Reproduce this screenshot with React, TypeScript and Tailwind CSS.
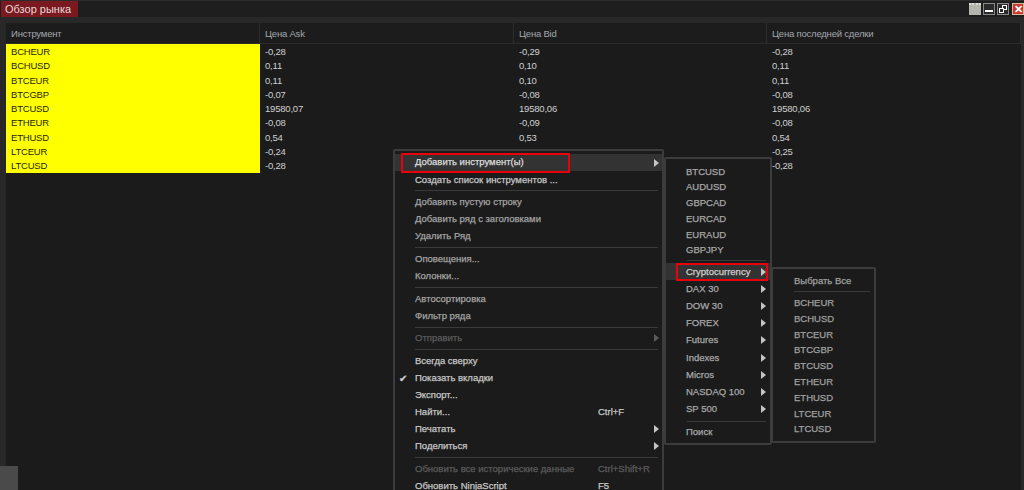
const COLUMNS = ['Инструмент', 'Цена Ask', 'Цена Bid', 'Цена последней сделки'];

const ROWS = [
  ['BCHEUR', '-0,28', '-0,29', '-0,28'],
  ['BCHUSD', '0,11', '0,10', '0,11'],
  ['BTCEUR', '0,11', '0,10', '0,11'],
  ['BTCGBP', '-0,07', '-0,08', '-0,08'],
  ['BTCUSD', '19580,07', '19580,06', '19580,06'],
  ['ETHEUR', '-0,08', '-0,09', '-0,08'],
  ['ETHUSD', '0,54', '0,53', '0,54'],
  ['LTCEUR', '-0,24', '-0,25', '-0,25'],
  ['LTCUSD', '-0,28', '-0,28', '-0,28'],
];

const COL_WIDTHS = ['w-[254px]', 'w-[254px]', 'w-[253px]', 'flex-1'];

type MainItem = {
  label?: string;
  hint?: string;
  arrow?: boolean;
  disabled?: boolean;
  checked?: boolean;
  dim?: boolean;
  active?: boolean;
};

const MAIN_MENU: MainItem[] = [
  { label: 'Добавить инструмент(ы)', arrow: true, active: true },
  { label: 'Создать список инструментов ...' },
  {},
  { label: 'Добавить пустую строку', dim: true },
  { label: 'Добавить ряд с заголовками', dim: true },
  { label: 'Удалить Ряд', dim: true },
  {},
  { label: 'Оповещения...', dim: true },
  { label: 'Колонки...', dim: true },
  {},
  { label: 'Автосортировка', dim: true },
  { label: 'Фильтр ряда', dim: true },
  {},
  { label: 'Отправить', arrow: true, disabled: true },
  {},
  { label: 'Всегда сверху' },
  { label: 'Показать вкладки', checked: true },
  { label: 'Экспорт...' },
  { label: 'Найти...', hint: 'Ctrl+F' },
  { label: 'Печатать', arrow: true },
  { label: 'Поделиться', arrow: true },
  {},
  { label: 'Обновить все исторические данные', hint: 'Ctrl+Shift+R', disabled: true },
  { label: 'Обновить NinjaScript', hint: 'F5' },
];

const SUB_TOP = ['BTCUSD', 'AUDUSD', 'GBPCAD', 'EURCAD', 'EURAUD', 'GBPJPY'];
const SUB_GROUPS = ['DAX 30', 'DOW 30', 'FOREX', 'Futures', 'Indexes', 'Micros', 'NASDAQ 100', 'SP 500'];
const CRYPTO = ['BCHEUR', 'BCHUSD', 'BTCEUR', 'BTCGBP', 'BTCUSD', 'ETHEUR', 'ETHUSD', 'LTCEUR', 'LTCUSD'];

function Arrow({ dim }: { dim?: boolean }) {
  return (
    <svg width="5" height="8" viewBox="0 0 5 8" className="shrink-0">
      <path d="M0 0 L5 4 L0 8 Z" fill={dim ? '#5a5a5a' : '#c4c4c4'} />
    </svg>
  );
}

function Separator({ className }: { className: string }) {
  return <div className={`h-px bg-[#3a3a3a] ${className}`} />;
}

function WindowButtons() {
  return (
    <div className="flex items-center gap-[2px] pt-[2px]">
      <div className="w-[12px] h-[12px] bg-[#b4b6ae] border-t-2 border-dotted border-[#dcdcdc]" />
      <div className="w-[12px] h-[12px] bg-[#2a2a2a] border border-[#8a8a8a] flex items-end justify-center pb-[2px]">
        <div className="w-[8px] h-[2px] bg-white" />
      </div>
      <div className="w-[12px] h-[12px] bg-[#2a2a2a] border border-[#8a8a8a] relative">
        <div className="absolute left-[4px] top-[1px] w-[5px] h-[5px] border border-white" />
        <div className="absolute left-[1px] top-[4px] w-[5px] h-[5px] border border-white bg-[#2a2a2a]" />
      </div>
      <div className="w-[12px] h-[12px] ml-[1px] bg-[#c9372c] border border-[#d8b9a0] flex items-center justify-center text-white text-[11px] leading-none font-bold">
        ✕
      </div>
    </div>
  );
}

function MarketGrid() {
  return (
    <div className="flex-1 ml-[5px] mr-[3px] mt-[6px] bg-[#1b1b1b] border-l border-[#262626]">
      <div className="flex h-[21px] border-b border-[#2c2c2c] bg-[#1c1c1c]">
        {COLUMNS.map((col, i) => (
          <div
            key={col}
            className={`${COL_WIDTHS[i]} pl-[5px] text-[9.5px] tracking-[-0.2px] leading-[21px] text-[#a3a8ad] border-r border-[#2c2c2c]`}
          >
            {col}
          </div>
        ))}
      </div>
      {ROWS.map((row) => (
        <div key={row[0]} className="flex h-[14.3px]">
          {row.map((cell, i) => (
            <div
              key={i}
              className={`${COL_WIDTHS[i]} pl-[5px] text-[9.5px] tracking-[-0.2px] leading-[16px] ${
                i === 0 ? 'bg-[#ffff00] text-[#1f1f00]' : 'text-[#cfcfcf]'
              }`}
            >
              {cell}
            </div>
          ))}
        </div>
      ))}
    </div>
  );
}

function MainMenu() {
  return (
    <div className="absolute left-[393px] top-[149px] w-[271px] h-[345px] bg-[#1b1b1b] border-2 border-[#3c3c3c] rounded-[2px] pt-[3px] [-webkit-text-stroke:0.25px]">
      {MAIN_MENU.map((item, i) => {
        if (!item.label) {
          return <Separator key={i} className="ml-[20px] mr-[4px] my-[2.25px]" />;
        }
        const color = item.disabled ? 'text-[#5c5c5c]' : item.dim ? 'text-[#a4a4a4]' : 'text-[#c8c8c8]';
        return (
          <div
            key={i}
            className={`relative flex items-center h-[17.1px] pl-[20px] pr-[3px] text-[9.5px] ${color} ${
              item.active ? 'bg-[#333333] text-[#dddddd]' : ''
            }`}
          >
            {item.checked && <span className="absolute left-[4px] text-[10px] text-[#d0d0d0]">✔</span>}
            <span className="w-[183px] whitespace-nowrap">{item.label}</span>
            <span className="flex-1 whitespace-nowrap">{item.hint}</span>
            {item.arrow && <Arrow dim={item.disabled} />}
            {item.active && (
              <div className="absolute left-[6px] top-[-1px] w-[169px] h-[20px] border-2 border-[#e8000b]" />
            )}
          </div>
        );
      })}
    </div>
  );
}

function InstrumentMenu() {
  return (
    <div className="absolute left-[664px] top-[157px] w-[108px] h-[288px] bg-[#1b1b1b] border-2 border-[#3c3c3c] rounded-[2px] pt-[4.5px] [-webkit-text-stroke:0.25px] text-[9.5px] text-[#a8a8a8]">
      {SUB_TOP.map((name) => (
        <div key={name} className="h-[15.8px] leading-[15.8px] pl-[20px]">
          {name}
        </div>
      ))}
      <Separator className="ml-[21px] mr-[4px] my-[2px]" />
      <div className="relative flex items-center justify-between h-[17px] pl-[20px] pr-[4px] bg-[#333333] text-[#cfcfcf]">
        <span>Cryptocurrency</span>
        <Arrow />
        <div className="absolute left-[10px] top-0 w-[92px] h-[18px] border-2 border-[#e8000b]" />
      </div>
      {SUB_GROUPS.map((name) => (
        <div key={name} className="flex items-center justify-between h-[17.2px] pl-[20px] pr-[4px]">
          <span>{name}</span>
          <Arrow />
        </div>
      ))}
      <Separator className="ml-[21px] mr-[4px] mt-[3px] mb-[1px]" />
      <div className="h-[17px] leading-[17px] pl-[20px]">Поиск</div>
    </div>
  );
}

function CryptoMenu() {
  return (
    <div className="absolute left-[771px] top-[267px] w-[105px] h-[176px] bg-[#1b1b1b] border-2 border-[#3c3c3c] rounded-[2px] pt-[4px] [-webkit-text-stroke:0.25px] text-[9.5px] text-[#a0a0a0]">
      <div className="h-[16px] leading-[16px] pl-[21px]">Выбрать Все</div>
      <Separator className="ml-[21px] mr-[4px] mt-[2px] mb-[3px]" />
      {CRYPTO.map((name) => (
        <div key={name} className="h-[15.8px] leading-[15.8px] pl-[21px]">
          {name}
        </div>
      ))}
    </div>
  );
}

export default function App() {
  return (
    <div className="relative w-[1024px] h-[490px] overflow-hidden bg-[#282828] font-['Liberation_Sans',Arial,sans-serif] flex flex-col">
      <div className="h-[17px] bg-[#1e1e1e] flex items-start justify-between border-t border-[#2c2c2c]">
        <div className="ml-[1px] w-[77px] h-[16px] bg-[#7a1a20] text-[#e8d8d8] text-[11px] leading-[16px] pl-[4px]">
          Обзор рынка
        </div>
        <WindowButtons />
      </div>
      <MarketGrid />
      <div className="absolute left-0 bottom-0 w-[18px] h-[24px] bg-[#4a4a4a]" />
      <MainMenu />
      <InstrumentMenu />
      <CryptoMenu />
    </div>
  );
}
